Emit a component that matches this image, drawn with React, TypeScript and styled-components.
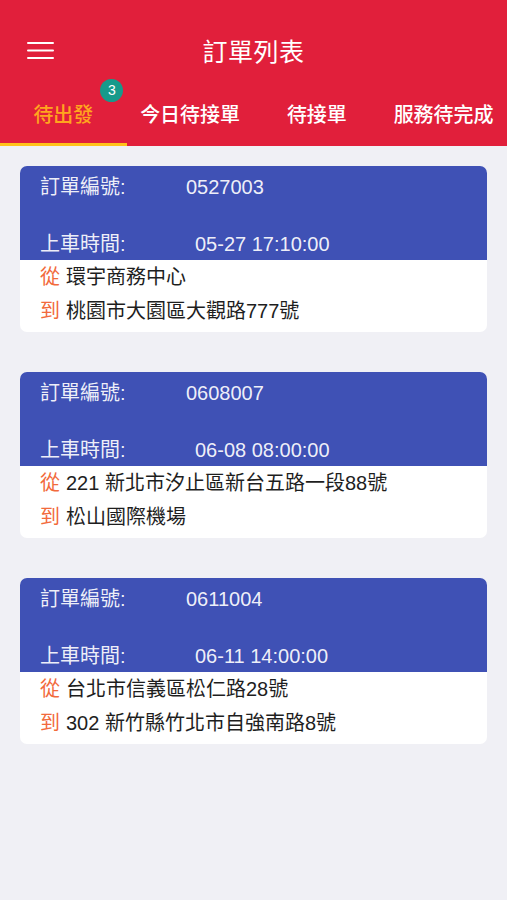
import React from "react";
import styled, { createGlobalStyle } from "styled-components";

const GlobalStyle = createGlobalStyle`
  html, body { margin: 0; padding: 0; background: #F0F0F5; }
  body { font-family: "Liberation Sans", "Noto Sans CJK TC", sans-serif; }
  * { box-sizing: border-box; }
`;

const Page = styled.div`
  width: 507px;
  min-height: 900px;
  background: #F0F0F5;
`;

const Header = styled.header`
  background: #E11F3B;
  padding-top: 20px;
`;

const TopBar = styled.div`
  height: 60px;
  display: flex;
  align-items: center;
  position: relative;
  padding-left: 27px;
`;

const MenuButton = styled.button`
  border: none;
  background: none;
  padding: 0;
  display: flex;
  width: 28px;
  height: 20px;
  cursor: pointer;
`;

const Title = styled.h1`
  position: absolute;
  left: 0;
  right: 0;
  text-align: center;
  margin: 0;
  font-size: 25px;
  font-weight: 400;
  color: #FFFFFF;
  pointer-events: none;
  letter-spacing: 0.5px;
`;

const Tabs = styled.nav`
  display: grid;
  grid-template-columns: repeat(4, 1fr);
  height: 66px;
`;

const Tab = styled.div<{ $active?: boolean }>`
  display: flex;
  align-items: center;
  justify-content: center;
  font-size: 20px;
  font-weight: 500;
  color: ${(p) => (p.$active ? "#FFA51E" : "#FFFFFF")};
  border-bottom: 3px solid ${(p) => (p.$active ? "#FFC21A" : "transparent")};
  padding-top: 3px;
`;

const TabLabel = styled.span`
  position: relative;
`;

const Badge = styled.span`
  position: absolute;
  left: calc(100% + 7px);
  top: -20px;
  width: 23px;
  height: 23px;
  border-radius: 50%;
  background: #169A8B;
  color: #FFFFFF;
  font-size: 14px;
  font-weight: 400;
  display: flex;
  align-items: center;
  justify-content: center;
`;

const List = styled.main`
  display: flex;
  flex-direction: column;
  gap: 40px;
  padding: 20px 20px;
`;

const Card = styled.section`
  background: #FFFFFF;
  border-radius: 7px;
  overflow: hidden;
`;

const CardHead = styled.div`
  background: #3F51B5;
  height: 94px;
  padding: 7px 20px 2px;
  display: flex;
  flex-direction: column;
  justify-content: space-between;
`;

const InfoRow = styled.div`
  display: flex;
  line-height: 28px;
  font-size: 20px;
  color: rgba(255, 255, 255, 0.93);
`;

const InfoLabel = styled.span`
  width: 146px;
  flex-shrink: 0;
`;

const InfoValue = styled.span<{ $indent?: number }>`
  padding-left: ${(p) => p.$indent ?? 0}px;
`;

const CardBody = styled.div`
  padding: 0 20px 4px;
`;

const PlaceRow = styled.div`
  display: flex;
  gap: 6px;
  line-height: 34px;
  font-size: 20px;
  color: #1E1E1E;
`;

const PlaceTag = styled.span`
  color: #F26A3C;
`;

type Order = { no: string; time: string; from: string; to: string };

const orders: Order[] = [
  { no: "0527003", time: "05-27 17:10:00", from: "環宇商務中心", to: "桃園市大園區大觀路777號" },
  { no: "0608007", time: "06-08 08:00:00", from: "221 新北市汐止區新台五路一段88號", to: "松山國際機場" },
  { no: "0611004", time: "06-11 14:00:00", from: "台北市信義區松仁路28號", to: "302 新竹縣竹北市自強南路8號" },
];

const tabs = ["待出發", "今日待接單", "待接單", "服務待完成"];

const MenuIcon = () => (
  <svg width="28" height="20" viewBox="0 0 28 20" fill="none">
    <rect x="0" y="2" width="27" height="2" rx="1" fill="#FFFFFF" />
    <rect x="0" y="9.5" width="27" height="2" rx="1" fill="#FFFFFF" />
    <rect x="0" y="17" width="27" height="2" rx="1" fill="#FFFFFF" />
  </svg>
);

export default function App() {
  return (
    <Page>
      <GlobalStyle />
      <Header>
        <TopBar>
          <MenuButton aria-label="menu">
            <MenuIcon />
          </MenuButton>
          <Title>訂單列表</Title>
        </TopBar>
        <Tabs>
          {tabs.map((t, i) => (
            <Tab key={t} $active={i === 0}>
              <TabLabel>
                {t}
                {i === 0 && <Badge>3</Badge>}
              </TabLabel>
            </Tab>
          ))}
        </Tabs>
      </Header>
      <List>
        {orders.map((o) => (
          <Card key={o.no}>
            <CardHead>
              <InfoRow>
                <InfoLabel>訂單編號:</InfoLabel>
                <InfoValue>{o.no}</InfoValue>
              </InfoRow>
              <InfoRow>
                <InfoLabel>上車時間:</InfoLabel>
                <InfoValue $indent={9}>{o.time}</InfoValue>
              </InfoRow>
            </CardHead>
            <CardBody>
              <PlaceRow>
                <PlaceTag>從</PlaceTag>
                <span>{o.from}</span>
              </PlaceRow>
              <PlaceRow>
                <PlaceTag>到</PlaceTag>
                <span>{o.to}</span>
              </PlaceRow>
            </CardBody>
          </Card>
        ))}
      </List>
    </Page>
  );
}
